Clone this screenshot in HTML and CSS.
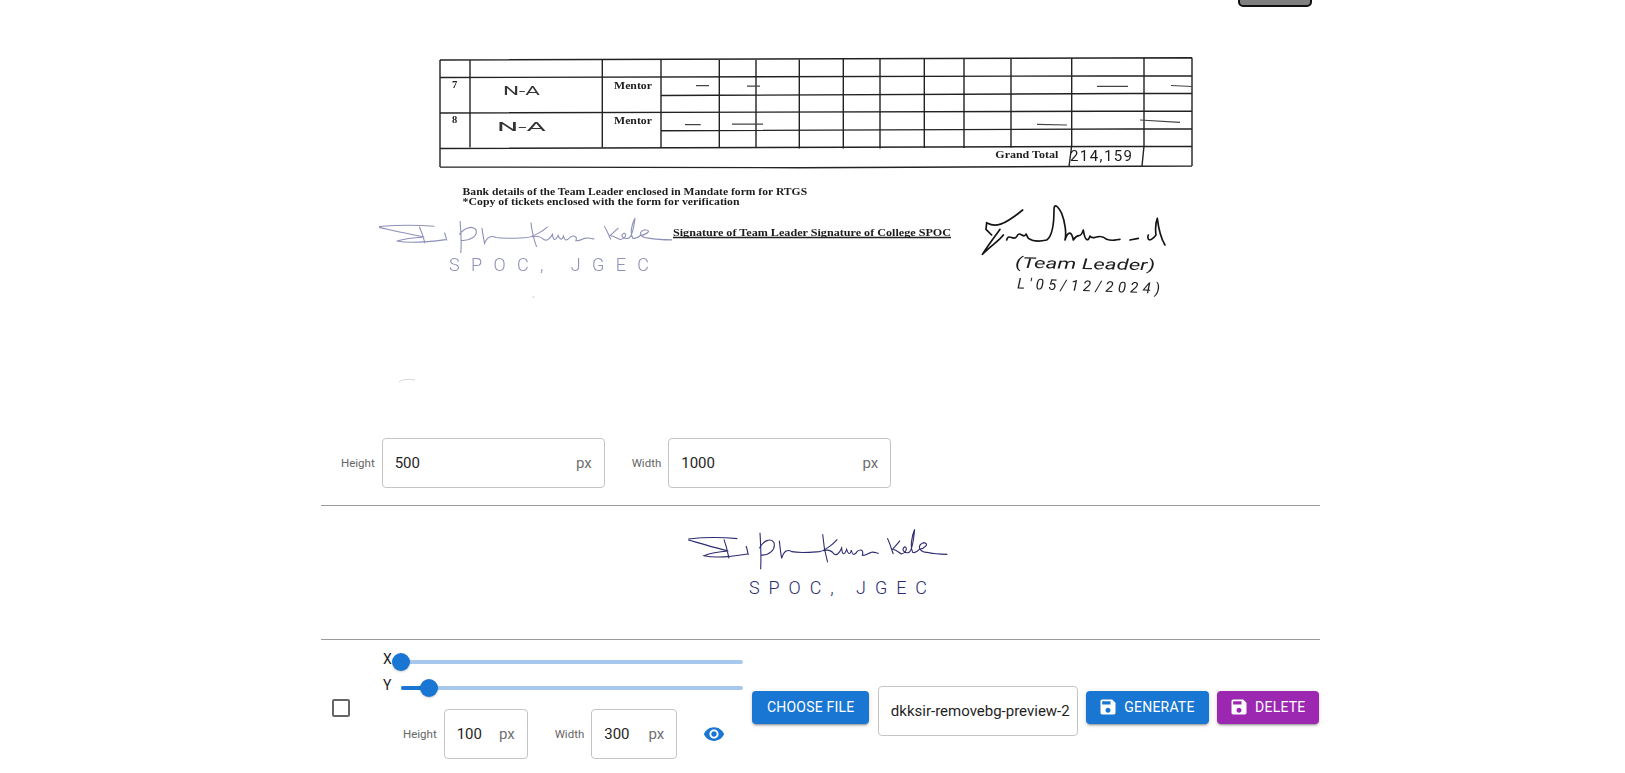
FILE: index.html
```html
<!DOCTYPE html>
<html lang="en">
<head>
<meta charset="utf-8">
<title>Signature editor</title>
<link rel="stylesheet" href="styles.css">
</head>
<body>
<main class="page">
  <div class="topbar"><button class="top-btn" type="button" aria-label="Back"></button></div>

  <svg class="doc" viewBox="321 7 999 413" xmlns="http://www.w3.org/2000/svg">
    <defs>
      <g id="sig">
        <path d="M85 57C130 52 190 52 232 56M85 60C120 70 170 85 205 93C180 95 150 100 132 107C160 114 205 112 262 102M192 58C198 75 203 95 207 115M258 78C262 85 262 95 265 105M300 38C302 70 304 110 302 148M298 85C310 62 332 52 342 68C348 90 325 108 303 105M358 62C360 80 362 100 365 115C372 90 385 88 395 95C420 100 450 97 478 95C495 92 520 72 532 58M488 43C490 70 495 100 503 127M490 92C505 88 515 92 522 102C530 108 538 100 545 84C547 105 552 108 560 88C563 100 570 108 574 90C578 108 584 106 592 94C602 86 612 90 607 106C618 108 626 98 634 97C642 94 650 100 656 100M682 55C690 70 695 90 700 102M720 62C710 75 700 85 698 88C710 90 720 100 725 102C735 100 745 85 735 80C725 85 728 100 745 98C755 96 760 70 764 28C755 50 750 80 758 97C765 100 772 95 778 88C795 85 810 70 790 68C772 75 775 95 800 97C820 102 845 103 862 103" vector-effect="non-scaling-stroke"/>
      </g>
    </defs>

    <g class="grid">
      <path class="rule" d="M440 60L1192 57.7M440 77.5L1192 75.7M661 95.5L1192 93.3M440 113L1192 111M661 130.8L1192 128.7M440 148.5L1192 146.3M440 167L800 167.7L1192 166M440 60V167M1192 57.7V166"/>
      <path class="rule" d="M470 60V147.5M602.3 60V147.5M661 60V148M719.3 60V148M756 60V148M799.3 59.5V148.5M843.3 59V148.5M880 59V148.5M924.3 59V148M964 58.5V148M1011 58.5V147.5M1071.7 58V147M1144 57.7V146"/>
      <path class="rule" d="M1071.5 147L1069 166.5M1144 146L1142 166"/>
    </g>
    <g class="dashes">
      <path d="M696 85.7H709M747 86.2H760M685 124.7H700.7M732 124.2H763M1097 86.3H1128M1171 85.5L1192 86.5M1037 124.4L1067 125M1140 120L1180 122.3"/>
    </g>

    <text class="scan-b" x="452" y="88">7</text>
    <text class="scan-b" x="452" y="123">8</text>
    <text class="scan-b" x="614" y="89" textLength="38" lengthAdjust="spacingAndGlyphs">Mentor</text>
    <text class="scan-b" x="614" y="124" textLength="38" lengthAdjust="spacingAndGlyphs">Mentor</text>
    <text class="scan-b" x="995.3" y="158" textLength="63" lengthAdjust="spacingAndGlyphs">Grand Total</text>
    <text class="hand" x="503" y="95" textLength="37" lengthAdjust="spacingAndGlyphs">N-A</text>
    <text class="hand" x="497" y="131" textLength="49" lengthAdjust="spacingAndGlyphs">N-A</text>
    <text class="hand hand-total" x="1070" y="161" textLength="62">214,159</text>

    <text class="scan-b" x="462.6" y="195" textLength="344.5" lengthAdjust="spacingAndGlyphs">Bank details of the Team Leader enclosed in Mandate form for RTGS</text>
    <text class="scan-b" x="462.6" y="205" textLength="277" lengthAdjust="spacingAndGlyphs">*Copy of tickets enclosed with the form for verification</text>
    <text class="scan-b" x="673" y="236" textLength="278" lengthAdjust="spacingAndGlyphs">Signature of Team Leader Signature of College SPOC</text>
    <path class="rule" d="M673 237.5H951"/>

    <use class="sig-light" href="#sig" transform="translate(347 210) scale(.377 .29)"/>
    <text class="hand hand-blue" x="449" y="271" textLength="200">SPOC, JGEC</text>

    <path class="lead-sig" d="M110 98L108 118L125 135M113 100C135 112 160 108 218 60M150 118C130 145 115 165 97 193C125 165 150 150 160 135M170 150C176 128 190 155 200 140C210 118 220 150 228 132L235 145C250 155 270 155 290 150C305 140 312 110 312 60C312 40 322 45 335 70C345 95 350 130 345 150C355 120 365 125 370 150C385 125 390 150 400 120C405 155 415 155 420 138C430 155 445 125 470 148C490 155 500 148 510 148M540 150L565 145M595 135C590 150 600 158 618 135C615 110 618 95 622 85C625 110 630 140 645 165" transform="translate(950 190) scale(.3333)"/>
    <text class="hand hand-note" x="1015" y="269" textLength="140" lengthAdjust="spacingAndGlyphs" transform="rotate(1 1085 265)">(Team Leader)</text>
    <text class="hand hand-note" x="1017" y="291" textLength="143" transform="rotate(2 1085 287)">L'05/12/2024)</text>

    <path class="speck" d="M532 297h3M399 382C403 379 409 379 415 380"/>
  </svg>

  <div class="fields fields-main">
    <span class="field-label label-h">Height</span>
    <div class="field field-wide"><span>500</span><span class="unit">px</span></div>
    <span class="field-label label-w">Width</span>
    <div class="field field-wide"><span>1000</span><span class="unit">px</span></div>
  </div>

  <hr class="divider">

  <svg class="preview" viewBox="321 506 999 133" xmlns="http://www.w3.org/2000/svg">
    <use class="sig-dark" href="#sig" transform="translate(660 520) scale(.3333)"/>
    <text class="hand hand-navy" x="749" y="594" textLength="178">SPOC, JGEC</text>
  </svg>

  <hr class="divider">

  <section class="controls">
    <div class="check">
      <svg class="check-icon" viewBox="0 0 24 24"><path d="M19 5v14H5V5h14m0-2H5c-1.1 0-2 .9-2 2v14c0 1.1.9 2 2 2h14c1.1 0 2-.9 2-2V5c0-1.1-.9-2-2-2z"/></svg>
    </div>

    <div class="adjust">
      <div class="slider-row">
        <span class="slider-label">X</span>
        <div class="slider">
          <span class="thumb" style="left:0%"></span>
        </div>
      </div>
      <div class="slider-row">
        <span class="slider-label">Y</span>
        <div class="slider">
          <span class="fill" style="width:8.3%"></span>
          <span class="thumb" style="left:8.3%"></span>
        </div>
      </div>
      <div class="fields fields-small">
        <span class="field-label label-h">Height</span>
        <div class="field field-h"><span>100</span><span class="unit">px</span></div>
        <span class="field-label label-w">Width</span>
        <div class="field field-w"><span>300</span><span class="unit">px</span></div>
        <svg class="eye" viewBox="0 0 24 24"><path d="M12 4.5C7 4.5 2.73 7.61 1 12c1.73 4.39 6 7.5 11 7.5s9.27-3.11 11-7.5c-1.73-4.39-6-7.5-11-7.5zM12 17c-2.76 0-5-2.24-5-5s2.24-5 5-5 5 2.24 5 5-2.24 5-5 5zm0-8c-1.66 0-3 1.34-3 3s1.34 3 3 3 3-1.34 3-3-1.34-3-3-3z"/></svg>
      </div>
    </div>

    <div class="actions">
      <button class="btn btn-blue btn-plain" type="button">Choose file</button>
      <div class="file-name">dkksir-removebg-preview-2</div>
      <button class="btn btn-blue" type="button">
        <svg class="btn-icon" viewBox="0 0 24 24"><path d="M17 3H5c-1.11 0-2 .9-2 2v14c0 1.1.89 2 2 2h14c1.1 0 2-.9 2-2V7l-4-4zm-5 16c-1.66 0-3-1.34-3-3s1.34-3 3-3 3 1.34 3 3-1.34 3-3 3zm3-10H5V5h10v4z"/></svg>
        Generate
      </button>
      <button class="btn btn-purple" type="button">
        <svg class="btn-icon" viewBox="0 0 24 24"><path d="M17 3H5c-1.11 0-2 .9-2 2v14c0 1.1.89 2 2 2h14c1.1 0 2-.9 2-2V7l-4-4zm-5 16c-1.66 0-3-1.34-3-3s1.34-3 3-3 3 1.34 3 3-1.34 3-3 3zm3-10H5V5h10v4z"/></svg>
        Delete
      </button>
    </div>
  </section>
</main>
</body>
</html>
```
FILE: styles.css
```css
* { box-sizing: border-box; }
html, body { margin: 0; padding: 0; height: 100%; overflow: hidden; background: #fff; }
body { font-family: Roboto, "Liberation Sans", sans-serif; color: #1f1f1f; font-size: 15px; }

.page { width: 999px; margin-left: 321px; }

.topbar { height: 7px; overflow: hidden; display: flex; justify-content: flex-end; align-items: flex-end; padding-right: 8px; }
.top-btn { width: 74px; height: 30px; flex: none; background: #808080; border: 2px solid #111; border-radius: 5px; padding: 0; }

.doc, .preview { display: block; width: 999px; }
.doc { height: 413px; filter: blur(.35px); }
.preview { height: 133px; }

.rule { fill: none; stroke: #222; stroke-width: 1.4; }
.dashes path { fill: none; stroke: #444; stroke-width: 1.2; }
.scan-b { font-family: "Liberation Serif", serif; font-weight: 700; font-size: 10.5px; fill: #1c1c1c; }
.hand { font-family: Roboto, "Liberation Sans", sans-serif; font-size: 13px; fill: #333; }
.hand-total { fill: #1c1c1c; font-size: 15px; }
.hand-note { fill: #1c1c1c; font-size: 15px; font-style: italic; }
.hand-blue { fill: #8d90b8; font-size: 18px; font-weight: 300; }
.hand-navy { fill: #2d2c70; font-size: 18px; font-weight: 300; }
.sig-light { fill: none; stroke: #8d90b8; stroke-width: 1.1; }
.sig-dark { fill: none; stroke: #2d2c70; stroke-width: 1.1; }
.lead-sig { fill: none; stroke: #141414; stroke-width: 5; stroke-linecap: round; stroke-linejoin: round; }
.speck { fill: none; stroke: #d4d4d4; stroke-width: 1; }

.fields { display: flex; align-items: center; }
.fields-main { padding: 18px 0 17px 20px; }
.field-label { font-size: 11.5px; color: #666; margin-right: 7px; flex: none; }
.field { height: 50px; flex: none; border: 1px solid #c4c4c4; border-radius: 4px; display: flex; align-items: center; justify-content: space-between; padding: 0 12px; font-size: 15px; color: #1f1f1f; }
.field-wide { width: 223px; }
.field-wide + .label-w { margin-left: 27px; }
.field-h { width: 84px; }
.field-w { width: 86px; }
.field-h + .label-w { margin-left: 27px; }
.unit { color: #707070; }

.divider { margin: 0; border: 0; border-top: 1px solid #9a9a9a; }

.controls { display: flex; height: 134px; align-items: center; }
.check { width: 40px; height: 40px; flex: none; display: flex; align-items: center; justify-content: center; margin: 2px 22px 0 0; }
.check-icon { width: 24px; height: 24px; fill: #666; }

.adjust { width: 360px; flex: none; align-self: flex-start; padding-top: 9px; margin-right: 9px; }
.slider-row { height: 26px; display: flex; align-items: center; }
.slider-label { width: 18px; flex: none; font-size: 14px; margin-top: -6px; color: #222; }
.slider { position: relative; flex: 1; height: 4px; border-radius: 2px; background: #a6c8ec; }
.fill { position: absolute; left: 0; top: 0; height: 4px; border-radius: 2px; background: #1976d2; }
.thumb { position: absolute; top: -7px; width: 18px; height: 18px; margin-left: -9px; border-radius: 50%; background: #1976d2; box-shadow: 0 1px 2px rgba(0,0,0,.2); }

.fields-small { padding: 8px 0 0 20px; }
.eye { width: 22px; height: 22px; margin-left: 26px; fill: #1976d2; flex: none; }

.actions { display: flex; align-items: center; gap: 8.5px; flex: none; }
.btn { display: inline-flex; align-items: center; height: 33px; padding: 0 14px 0 12px; border: 0; border-radius: 4px; color: #fff; font-family: Roboto, sans-serif; font-size: 14px; font-weight: 400; text-transform: uppercase; letter-spacing: .2px; box-shadow: 0 3px 1px -2px rgba(0,0,0,.2), 0 2px 2px 0 rgba(0,0,0,.14), 0 1px 5px 0 rgba(0,0,0,.12); }
.btn-plain { padding: 0 15px; }
.btn-blue { background: #1976d2; }
.btn-purple { background: #9c27b0; }
.btn-icon { width: 20px; height: 20px; fill: #fff; margin-right: 6px; flex: none; }
.file-name { width: 200px; height: 50px; margin-top: 8px; flex: none; display: flex; align-items: center; padding: 0 12px; border: 1px solid #c4c4c4; border-radius: 4px; font-size: 15px; white-space: nowrap; color: #1f1f1f; }
```
